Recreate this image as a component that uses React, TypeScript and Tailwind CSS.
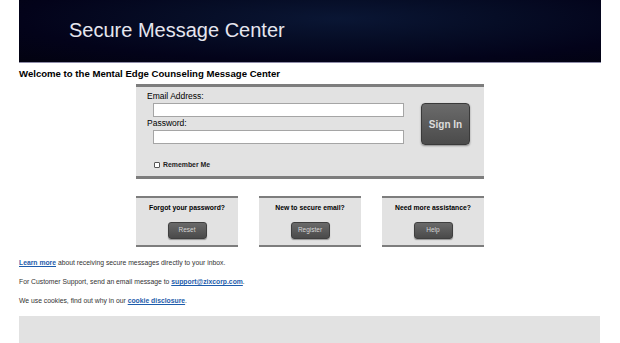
import React from 'react';

const font = { fontFamily: '"Liberation Sans", Arial, Helvetica, sans-serif' };

function SmallButton({ label }: { label: string }) {
  return (
    <button className="h-[17px] w-[39px] rounded-[3px] border border-[#3f3f3f] bg-gradient-to-b from-[#6a6a6a] to-[#4a4a4a] text-[6.5px] leading-none text-[#d6d6d6] shadow-[0_1px_1px_rgba(0,0,0,0.35)]">
      {label}
    </button>
  );
}

function HelpBox({ title, button }: { title: string; button: string }) {
  return (
    <div className="flex h-[51px] w-[102px] flex-col items-center border-y-2 border-[#7d7d7d] bg-[#e2e2e2]">
      <div className="mt-[5px] text-[6.8px] font-bold leading-[9px] text-black">{title}</div>
      <div className="mt-[3px]">
        <SmallButton label={button} />
      </div>
    </div>
  );
}

export default function App() {
  return (
    <div className="min-h-[343px] w-[620px] bg-white" style={font}>
      <div className="mx-[19px]">
        <div className="relative h-[63px] overflow-hidden border-b border-[#8e8ca8] bg-[#03031a]">
          <div className="absolute inset-0 bg-[radial-gradient(ellipse_at_55%_30%,#0a1634_0%,#060d26_35%,#03031a_70%,#020210_100%)]" />
          <div className="relative pl-[50px] pt-[18px] text-[20px] leading-[24px] text-[#e6e6ef]">
            Secure Message Center
          </div>
        </div>

        <div className="mt-[5px] text-[9.6px] font-bold leading-[12px] text-black">
          Welcome to the Mental Edge Counseling Message Center
        </div>

        <div className="mx-auto mt-[4px] w-[348px] border-y-[3px] border-[#7d7d7d] bg-[#e2e2e2]">
          <div className="flex items-start pl-[11px] pt-[3px]">
            <div className="flex w-[257px] flex-col">
              <div className="h-[13px] text-[8.5px] leading-[13px] text-black">Email Address:</div>
              <input
                className="ml-[6px] h-[14px] w-[251px] border border-[#a5a5a5] bg-white outline-none"
                type="text"
              />
              <div className="h-[13px] text-[8.5px] leading-[13px] text-black">Password:</div>
              <input
                className="ml-[6px] h-[14px] w-[251px] border border-[#a5a5a5] bg-white outline-none"
                type="password"
              />
            </div>
            <button className="ml-[17px] mt-[13px] h-[42px] w-[49px] rounded-[4px] border border-[#3a3a3a] bg-gradient-to-b from-[#6b6b6b] to-[#4b4b4b] text-[10px] font-bold text-[#dcdcdc] shadow-[0_1px_2px_rgba(0,0,0,0.4)]">
              Sign In
            </button>
          </div>
          <div className="mt-[15px] flex h-[9px] items-center pl-[18px]">
            <span className="h-[6px] w-[6px] rounded-[1px] border border-[#555] bg-white" />
            <span className="ml-[3px] text-[6.9px] font-bold leading-[9px] text-[#222]">Remember Me</span>
          </div>
          <div className="h-[7px]" />
        </div>

        <div className="mx-auto mt-[17px] flex w-[348px] justify-between">
          <HelpBox title="Forgot your password?" button="Reset" />
          <HelpBox title="New to secure email?" button="Register" />
          <HelpBox title="Need more assistance?" button="Help" />
        </div>

        <div className="mt-[11px] flex flex-col gap-[10px] text-[6.8px] leading-[9px] text-[#333]">
          <div>
            <a href="#" className="font-bold text-[#1d5cab] underline">Learn more</a> about receiving secure messages
            directly to your inbox.
          </div>
          <div>
            For Customer Support, send an email message to{' '}
            <a href="#" className="font-bold text-[#1d5cab] underline">support@zixcorp.com</a>.
          </div>
          <div>
            We use cookies, find out why in our{' '}
            <a href="#" className="font-bold text-[#1d5cab] underline">cookie disclosure</a>.
          </div>
        </div>

        <div className="mt-[11px] h-[30px] w-[581px] bg-[#e2e2e2]" />
      </div>
    </div>
  );
}
